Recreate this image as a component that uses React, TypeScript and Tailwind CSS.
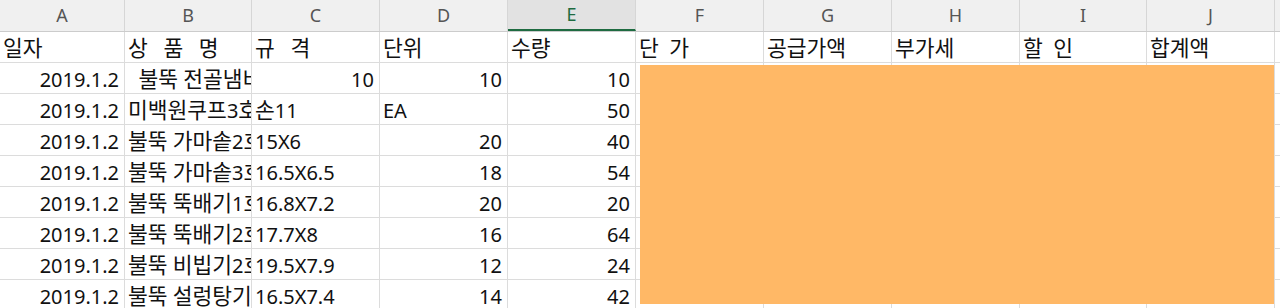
import React from "react";

const cols = [
    { key: "A", w: "w-[125px]" },
    { key: "B", w: "w-[127px]" },
    { key: "C", w: "w-[128px]" },
    { key: "D", w: "w-[128px]" },
    { key: "E", w: "w-[128px]" },
    { key: "F", w: "w-[128px]" },
    { key: "G", w: "w-[128px]" },
    { key: "H", w: "w-[128px]" },
    { key: "I", w: "w-[127px]" },
    { key: "J", w: "w-[128px]" },
];

type Cell = { t: string; r?: boolean };

const titles: Cell[] = [
    { t: "일자" },
    { t: "상   품   명" },
    { t: "규   격" },
    { t: "단위" },
    { t: "수량" },
    { t: "단  가" },
    { t: "공급가액" },
    { t: "부가세" },
    { t: "할  인" },
    { t: "합계액" },
];

const rows: Cell[][] = [
    [{ t: "2019.1.2", r: true }, { t: "  불뚝 전골냄비" }, { t: "10", r: true }, { t: "10", r: true }, { t: "10", r: true }],
    [{ t: "2019.1.2", r: true }, { t: "미백원쿠프3호" }, { t: "손11" }, { t: "EA" }, { t: "50", r: true }],
    [{ t: "2019.1.2", r: true }, { t: "불뚝 가마솥2호" }, { t: "15X6" }, { t: "20", r: true }, { t: "40", r: true }],
    [{ t: "2019.1.2", r: true }, { t: "불뚝 가마솥3호" }, { t: "16.5X6.5" }, { t: "18", r: true }, { t: "54", r: true }],
    [{ t: "2019.1.2", r: true }, { t: "불뚝 뚝배기1호" }, { t: "16.8X7.2" }, { t: "20", r: true }, { t: "20", r: true }],
    [{ t: "2019.1.2", r: true }, { t: "불뚝 뚝배기2호" }, { t: "17.7X8" }, { t: "16", r: true }, { t: "64", r: true }],
    [{ t: "2019.1.2", r: true }, { t: "불뚝 비빕기2호" }, { t: "19.5X7.9" }, { t: "12", r: true }, { t: "24", r: true }],
    [{ t: "2019.1.2", r: true }, { t: "불뚝 설렁탕기" }, { t: "16.5X7.4" }, { t: "14", r: true }, { t: "42", r: true }],
];

// hangul in the original renders a bit larger than the latin digits
function Text({ s }: { s: string }) {
    const parts = s.split(/([\uAC00-\uD7A3]+)/);
    return (
        <span className="leading-[24px]">
            {parts.map((p, i) =>
                /[\uAC00-\uD7A3]/.test(p) ? (
                    <span key={i} className="text-[21.5px]">{p}</span>
                ) : (
                    <React.Fragment key={i}>{p}</React.Fragment>
                )
            )}
        </span>
    );
}

function Row({ cells }: { cells: Cell[] }) {
    return (
        <div className="flex h-[31px] border-b border-[#dcdcdc]">
            {cols.map((c, i) => {
                const cell = cells[i];
                return (
                    <div
                        key={c.key}
                        className={`${c.w} shrink-0 h-full border-r border-[#dcdcdc] flex items-end pb-[1px] overflow-hidden whitespace-pre ${
                            cell?.r ? "justify-end pr-[5px]" : "justify-start pl-[3px]"
                        }`}
                    >
                        {cell && <Text s={cell.t} />}
                    </div>
                );
            })}
            <div className="flex-1" />
        </div>
    );
}

export default function App() {
    return (
        <div
            className="relative w-[1280px] h-[308px] overflow-hidden bg-white text-[20px] text-[#111]"
            style={{ fontFamily: '"Noto Sans", "Noto Sans CJK KR", sans-serif' }}
        >
            {/* column letters */}
            <div className="flex h-[32px] bg-[#f0f0f0] border-b border-[#cccccc]">
                {cols.map((c) =>
                    c.key === "E" ? (
                        <div
                            key={c.key}
                            className={`${c.w} shrink-0 h-full bg-[#e2e2e2] border-r border-[#d6d6d6] border-b-2 border-b-[#1e6b41] flex items-center justify-center text-[18px] text-[#1e6b41]`}
                        >
                            {c.key}
                        </div>
                    ) : (
                        <div
                            key={c.key}
                            className={`${c.w} shrink-0 h-full border-r border-[#d6d6d6] flex items-center justify-center text-[18px] text-[#555]`}
                        >
                            {c.key}
                        </div>
                    )
                )}
                <div className="flex-1" />
            </div>

            <Row cells={titles} />
            {rows.map((r, i) => (
                <Row key={i} cells={r} />
            ))}

            {/* pasted highlight block */}
            <div className="absolute left-[640px] top-[65px] w-[634px] h-[239px] bg-[#ffb866]" />
        </div>
    );
}
